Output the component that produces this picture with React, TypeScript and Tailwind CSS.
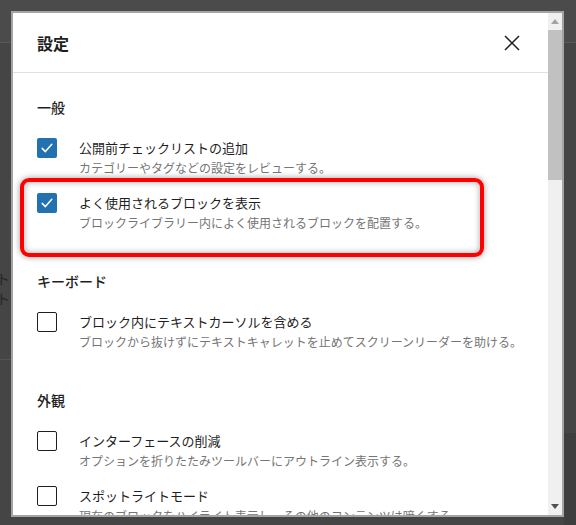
import React from "react";

type Option = {
  label: string;
  help: string;
  checked: boolean;
  highlight?: boolean;
};

type Section = {
  title: string;
  options: Option[];
};

const sections: Section[] = [
  {
    title: "一般",
    options: [
      {
        label: "公開前チェックリストの追加",
        help: "カテゴリーやタグなどの設定をレビューする。",
        checked: true,
      },
      {
        label: "よく使用されるブロックを表示",
        help: "ブロックライブラリー内によく使用されるブロックを配置する。",
        checked: true,
        highlight: true,
      },
    ],
  },
  {
    title: "キーボード",
    options: [
      {
        label: "ブロック内にテキストカーソルを含める",
        help: "ブロックから抜けずにテキストキャレットを止めてスクリーンリーダーを助ける。",
        checked: false,
      },
    ],
  },
  {
    title: "外観",
    options: [
      {
        label: "インターフェースの削減",
        help: "オプションを折りたたみツールバーにアウトライン表示する。",
        checked: false,
      },
      {
        label: "スポットライトモード",
        help: "現在のブロックをハイライト表示し、その他のコンテンツは暗くする。",
        checked: false,
      },
    ],
  },
];

function Checkbox({ checked }: { checked: boolean }) {
  if (checked) {
    return (
      <span className="flex h-5 w-5 shrink-0 items-center justify-center rounded-[2px] bg-[#2271b1]">
        <svg width="16" height="16" viewBox="0 0 16 16" fill="none">
          <path
            d="M3.2 8.4 6.4 11.6 12.8 4.2"
            stroke="white"
            strokeWidth="1.5"
            strokeLinecap="round"
            strokeLinejoin="round"
          />
        </svg>
      </span>
    );
  }
  return (
    <span className="h-5 w-5 shrink-0 rounded-[2px] border-[1.5px] border-[#1e1e1e] bg-white" />
  );
}

function OptionRow({ option }: { option: Option }) {
  return (
    <div className="relative flex gap-[22px]">
      {/* Red annotation box */}
      {option.highlight && (
        <div className="pointer-events-none absolute left-[-17px] top-[-15px] h-[79px] w-[464px] rounded-[9px] border-4 border-[#ff0000] shadow-[0_0_6px_rgba(0,0,0,0.4),inset_0_0_6px_rgba(0,0,0,0.35)]" />
      )}
      <Checkbox checked={option.checked} />
      <div className="flex flex-col">
        <span className="text-[13px] leading-5 text-[#1e1e1e]">
          {option.label}
        </span>
        <span className="whitespace-nowrap text-[12px] leading-5 text-[#757575]">
          {option.help}
        </span>
      </div>
    </div>
  );
}

export default function App() {
  return (
    <div
      className="relative h-[525px] w-[576px] overflow-hidden bg-[#454545]"
      style={{ fontFamily: '"Noto Sans CJK JP", "Noto Sans", sans-serif' }}
    >
      {/* Page behind the overlay */}
      <div className="pointer-events-none absolute inset-0">
        <div className="h-[43px] border-b border-[#5a5a5a] bg-[#4b4b4b]" />
        <div className="absolute left-[-4px] top-[268px] text-[14px] leading-5 text-[#262626]">
          ト
        </div>
        <div className="absolute left-[-4px] top-[288px] text-[14px] leading-5 text-[#262626]">
          ト
        </div>
        <div className="absolute left-0 top-[359px] h-px w-[11px] bg-[#555]" />
        <div className="absolute right-0 top-[433px] h-[92px] w-[12px] bg-[#3e3e3e]" />
      </div>

      <div className="relative pl-[11px] pt-[11px]">
        {/* Modal */}
        <div className="flex h-[506px] w-[553px] overflow-hidden border-2 border-[#a4a4a4] bg-white">
          <div className="flex min-w-0 flex-1 flex-col">
            <header className="flex h-[60px] shrink-0 items-center justify-between border-b border-[#e0e0e0] pl-6 pr-6">
              <h1 className="text-[16px] font-semibold leading-6 text-[#1e1e1e]">
                設定
              </h1>
              <button className="flex h-6 w-6 items-center justify-center">
                <svg width="16" height="16" viewBox="0 0 16 16" fill="none">
                  <path
                    d="M1 1 15 15M15 1 1 15"
                    stroke="#1e1e1e"
                    strokeWidth="1.5"
                  />
                </svg>
              </button>
            </header>

            <div className="flex flex-col pl-6 pt-6">
              {sections.map((section, i) => (
                <section key={section.title} className={i > 0 ? "mt-[38px]" : ""}>
                  <h2 className="text-[14px] font-medium leading-5 text-[#1e1e1e]">
                    {section.title}
                  </h2>
                  <div className="mt-[21px] flex flex-col gap-[15px]">
                    {section.options.map((option) => (
                      <OptionRow key={option.label} option={option} />
                    ))}
                  </div>
                </section>
              ))}
            </div>
          </div>

          {/* Scrollbar */}
          <div className="flex w-[14px] shrink-0 flex-col bg-[#f0f0f0]">
            <div className="flex h-[17px] items-center justify-center">
              <svg width="8" height="5" viewBox="0 0 8 5">
                <path d="M0 5 4 0 8 5Z" fill="#a3a3a3" />
              </svg>
            </div>
            <div className="h-[150px] bg-[#c1c1c1]" />
            <div className="flex-1" />
            <div className="flex h-[17px] items-center justify-center">
              <svg width="8" height="5" viewBox="0 0 8 5">
                <path d="M0 0 8 0 4 5Z" fill="#505050" />
              </svg>
            </div>
          </div>
        </div>
      </div>
    </div>
  );
}
